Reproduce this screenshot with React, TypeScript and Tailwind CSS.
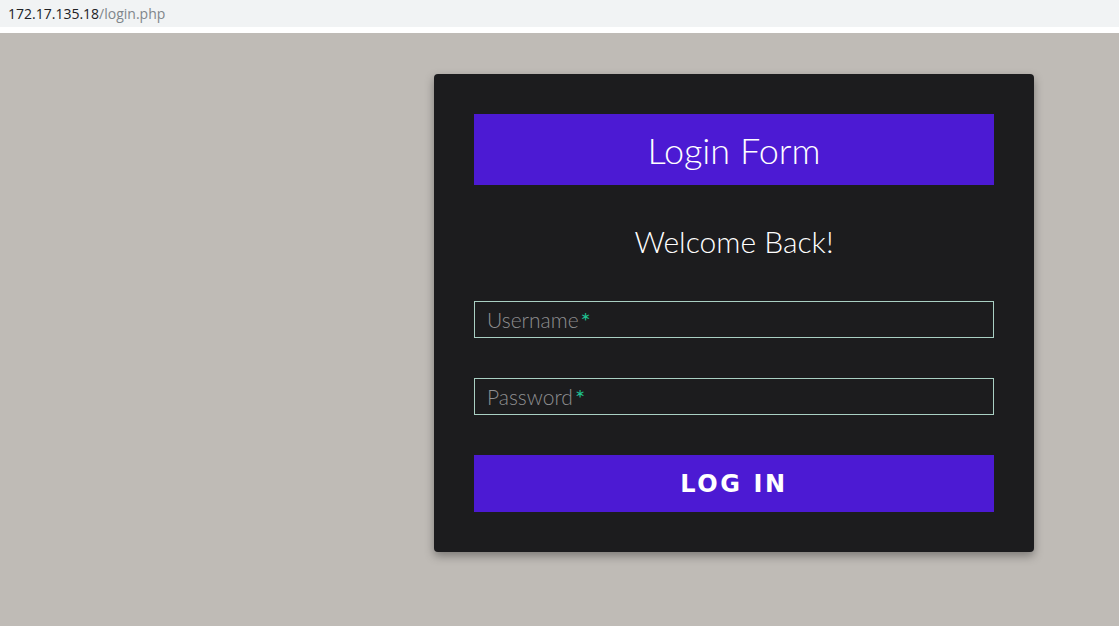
export default function App() {
  return (
    <div className="w-[1119px] h-[626px] flex flex-col bg-[#bfbbb6] overflow-hidden" style={{ fontFamily: "Lato, sans-serif" }}>
      <div className="h-[27px] bg-[#f1f3f4] flex items-center pl-[8px] text-[14px] leading-none" style={{ fontFamily: "'Open Sans', sans-serif" }}>
        <span className="text-[#202124]">172.17.135.18</span>
        <span className="text-[#80868b]">/login.php</span>
      </div>
      <div className="h-[6px] bg-white" />
      <div className="flex pl-[434px] pt-[41px]">
        <div className="w-[600px] bg-[#1c1c1e] rounded-[4px] shadow-[0_4px_10px_rgba(0,0,0,0.35)] p-[40px] flex flex-col">
          <div className="h-[71px] bg-[#4c1ad3] flex items-center justify-center text-white text-[36px] font-light">
            Login Form
          </div>
          <div className="h-[116px] flex items-center justify-center text-white text-[30px] font-light pb-[3px]">
            Welcome Back!
          </div>
          <div className="h-[37px] border border-[#a9cfc3] flex items-center px-[12px] text-[21px] text-[#8e8e90] font-light">
            Username<span className="text-[#1fbf8f] text-[24px] font-normal relative top-[1px] ml-[2px]">*</span>
          </div>
          <div className="h-[40px]" />
          <div className="h-[37px] border border-[#a9cfc3] flex items-center px-[12px] text-[21px] text-[#8e8e90] font-light">
            Password<span className="text-[#1fbf8f] text-[24px] font-normal relative top-[1px] ml-[2px]">*</span>
          </div>
          <div className="h-[40px]" />
          <div className="h-[57px] bg-[#4c1ad3] flex items-center justify-center text-white text-[24px] font-bold tracking-[2.6px]" style={{ fontFamily: "'DejaVu Sans', sans-serif" }}>
            LOG IN
          </div>
        </div>
      </div>
    </div>
  );
}
